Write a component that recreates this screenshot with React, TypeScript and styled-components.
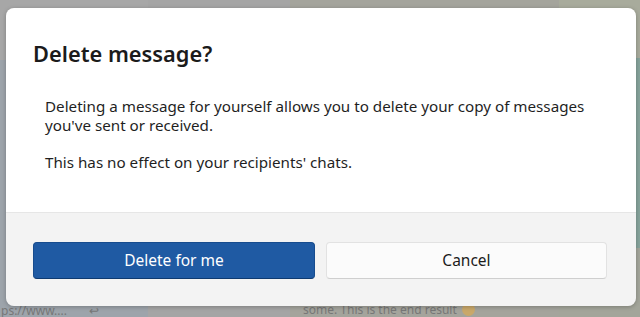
import React from "react";
import styled, { createGlobalStyle } from "styled-components";

const Global = createGlobalStyle`
  html, body { margin: 0; padding: 0; }
  body { width: 640px; height: 317px; overflow: hidden; font-family: "Noto Sans", "Open Sans", sans-serif; }
`;

const Screen = styled.div`
  position: relative;
  width: 640px;
  height: 317px;
  overflow: hidden;
  background: #a6a6a6;
`;

const Backdrop = styled.div`
  display: grid;
  grid-template-columns: 148px 142px 269px 81px;
  height: 100%;
`;

const Col = styled.div<{ $bg: string }>`
  background: ${(p) => p.$bg};
  display: flex;
  flex-direction: column;
`;

const Spacer = styled.div<{ $bg?: string }>`
  flex: 1;
  background: ${(p) => p.$bg || "transparent"};
`;

const Band = styled.div<{ $bg: string; $h: number }>`
  background: ${(p) => p.$bg};
  height: ${(p) => p.$h}px;
`;

const BgText = styled.div<{ $pad: number }>`
  font-family: "Noto Sans", sans-serif;
  font-size: 12px;
  line-height: 11px;
  color: #777777;
  white-space: nowrap;
  padding: 0 0 1px ${(p) => p.$pad}px;
  height: 11px;
  display: flex;
  align-items: flex-end;
  gap: 22px;
`;

const Inline = styled.span`
  display: flex;
  align-items: center;
  gap: 5px;
`;

const Emoji = styled.span`
  display: inline-block;
  width: 13px;
  height: 13px;
  border-radius: 50%;
  background: #c9a86a;
`;

const Dialog = styled.div`
  position: absolute;
  left: 6px;
  top: 8px;
  width: 630px;
  height: 298px;
  border-radius: 8px;
  overflow: hidden;
  display: flex;
  flex-direction: column;
  box-shadow: 0 1px 4px rgba(0, 0, 0, 0.25);
`;

const Body = styled.div`
  background: #ffffff;
  height: 204px;
  padding: 31px 0 0 27px;
  box-sizing: border-box;
`;

const Title = styled.h1`
  margin: 0;
  font-family: "Noto Sans", sans-serif;
  font-weight: 600;
  font-size: 21.8px;
  line-height: 30px;
  color: #1b1b1b;
`;

const Paragraph = styled.p<{ $mt: number }>`
  margin: ${(p) => p.$mt}px 0 0 12px;
  font-family: "Noto Sans", sans-serif;
  font-size: 15.2px;
  line-height: 19px;
  color: #1f1f1f;
  max-width: 556px;
`;

const Footer = styled.div`
  flex: 1;
  background: #f3f3f3;
  border-top: 1px solid #e6e6e6;
  display: grid;
  grid-template-columns: 282px 281px;
  gap: 11px;
  padding: 29px 0 0 27px;
  align-content: start;
`;

const Button = styled.button<{ $primary?: boolean }>`
  height: 37px;
  border-radius: 4px;
  font-family: "Noto Sans", sans-serif;
  font-size: 15.5px;
  cursor: pointer;
  border: 1px solid ${(p) => (p.$primary ? "#174c8e" : "#e2e2e2")};
  border-bottom-color: ${(p) => (p.$primary ? "#0e3a70" : "#cfcfcf")};
  background: ${(p) => (p.$primary ? "#1f5aa3" : "#fbfbfb")};
  color: ${(p) => (p.$primary ? "#ffffff" : "#1b1b1b")};
  padding: 0 0 2px;
`;

export default function App() {
  return (
    <>
      <Global />
      <Screen>
        <Backdrop>
          <Col $bg="#9da4ab">
            <Band $bg="#a7a7a7" $h={60} />
            <Spacer />
            <BgText $pad={1}>
              <span>ps://www....</span>
              <span>↩</span>
            </BgText>
          </Col>
          <Col $bg="#a5a5a5">
            <Spacer />
          </Col>
          <Col $bg="#a4a49c">
            <Spacer />
            <BgText $pad={13}>
              <Inline>
                some. This is the end result <Emoji />
              </Inline>
            </BgText>
          </Col>
          <Col $bg="#a8ab9c">
            <Band $bg="#a8ab9c" $h={58} />
            <Band $bg="#86a39b" $h={190} />
            <Spacer $bg="#a3a59a" />
          </Col>
        </Backdrop>
        <Dialog>
          <Body>
            <Title>Delete message?</Title>
            <Paragraph $mt={28}>
              Deleting a message for yourself allows you to delete your copy of messages
              you've sent or received.
            </Paragraph>
            <Paragraph $mt={18}>This has no effect on your recipients' chats.</Paragraph>
          </Body>
          <Footer>
            <Button $primary>Delete for me</Button>
            <Button>Cancel</Button>
          </Footer>
        </Dialog>
      </Screen>
    </>
  );
}
